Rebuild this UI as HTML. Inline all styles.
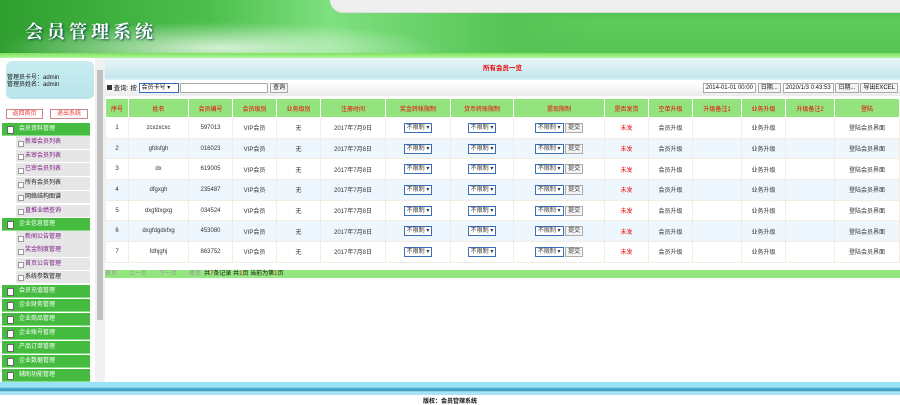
<!DOCTYPE html>
<html><head><meta charset="utf-8"><style>
*{margin:0;padding:0;box-sizing:border-box}
body{width:900px;height:405px;overflow:hidden;background:#fff;font-family:"Liberation Sans","Noto Sans CJK SC",sans-serif;font-size:7px;color:#333;position:relative}
.abs{position:absolute}
#hdr{left:0;top:0;width:900px;height:53px;background:linear-gradient(#44b944,#5ccc5c 40%,#55c455)}
#hdrtop{left:330px;top:0;width:570px;height:13px;background:#efefef;border-bottom:1px solid #ddd;border-bottom-left-radius:14px}
#hdrl{left:0;top:0;width:600px;height:53px;background:radial-gradient(ellipse 220px 26px at 220px 48px,rgba(255,255,255,.75),rgba(255,255,255,0)),linear-gradient(90deg,#2f9f2f,#4cc04c 35%,#7fe07f 55%,#55c455 85%,rgba(85,196,85,0))}
#logo{left:25px;top:18px;font-size:18px;color:#fff;font-weight:bold;letter-spacing:4px;text-shadow:1px 1px 2px #145;font-family:"Liberation Serif","Noto Serif CJK SC",serif}
#strip{left:0;top:53px;width:900px;height:5px;background:linear-gradient(#7ee05a,#b0f7a0)}
#left{left:0;top:58px;width:95px;height:324px;background:#fff}
#info{left:6px;top:3px;width:88px;height:38px;border-radius:6px;background:linear-gradient(#c8edf1,#b9e3ea);font-size:6px;color:#111;padding:14px 0 0 1px;line-height:7px}
.btn{top:51px;height:10px;border:1px solid #c88;background:#fff;color:#e33;font-size:6px;line-height:8px;text-align:center}
.mh{position:absolute;left:2px;width:88px;height:13px;background:#45bb3f;color:#fff;font-size:6px;line-height:13px;padding-left:17px;border-bottom:1px solid #8d8}
.mh:before{content:"";position:absolute;left:5px;top:3px;width:5px;height:6px;background:#fff;border:1px solid #666}
.mi{position:absolute;left:16px;width:74px;height:13.5px;background:#e6e6e6;color:#80208a;font-size:6px;line-height:13px;padding-left:9px;border-bottom:1px solid #fff}
.mi:before{content:"";position:absolute;left:2px;top:4.5px;width:4px;height:4px;border:1px solid #999;background:#fff}
#sb{left:95px;top:58px;width:10px;height:324px;background:#f1f1f1}
#sbt{left:97px;top:70px;width:6px;height:250px;background:#c1c1c1}
#title{left:105px;top:58px;width:795px;height:22px;background:linear-gradient(#eaf7fa,#c2e4ed);border-bottom:2px solid #d7eef3;text-align:center;color:#e00;font-size:6.5px;line-height:22px;font-weight:bold}
#tool{left:105px;top:82px;width:795px;height:14px;background:linear-gradient(#fff,#ececec);font-size:6.5px;color:#111;line-height:14px}
.sel{display:inline-block;border:1px solid #3a6fb8;background:#fff;height:10px;line-height:8px;vertical-align:middle;font-size:6px;padding:0 2px}
.b2{display:inline-block;border:1px solid #aaa;background:#f4f4f4;height:10px;line-height:8px;vertical-align:middle;font-size:6px;padding:0 2px}
table{position:absolute;left:105px;top:98px;width:795px;border-collapse:collapse}
td,th{border:1px solid #f3ece0;text-align:center;font-size:6px;font-weight:normal;height:20.7px;white-space:nowrap}
th{background:#93e37e;color:#e00;height:19px;border-color:#fff}
tr:nth-child(odd) td{background:#eef7fd}
.r{color:#e00}
#pg{left:105px;top:270px;width:795px;height:8px;background:#93e77e;font-size:6px;line-height:8px;color:#111}
#pg span.g{color:#999;margin-right:12px}
#foot{left:0;top:382px;width:900px;height:13px;background:linear-gradient(#9ce2f6 0,#9ce2f6 40%,#5bbddb 45%,#3a8fb6 65%,#a8e4f5 75%)}
#ft{left:0;top:396px;width:900px;text-align:center;font-size:6px;color:#111;font-weight:bold}
</style></head><body>
<div id="hdr" class="abs"></div><div id="hdrl" class="abs"></div><div id="hdrtop" class="abs"></div>
<div id="logo" class="abs">会员管理系统</div>
<div id="strip" class="abs"></div>
<div id="left" class="abs">
<div id="info" class="abs">管理员卡号：admin<br>管理员姓名：admin</div>
<div class="btn abs" style="left:6px;width:37px">返回首页</div>
<div class="btn abs" style="left:50px;width:38px">退出系统</div>
<div class="mh" style="top:65px">会员资料管理</div>
<div class="mi" style="top:78px">新增会员列表</div>
<div class="mi" style="top:91.7px">未审会员列表</div>
<div class="mi" style="top:105.4px">已审会员列表</div>
<div class="mi" style="top:119.1px;color:#222">所有会员列表</div>
<div class="mi" style="top:132.8px;color:#222">网络结构图谱</div>
<div class="mi" style="top:146.5px">直推业绩查询</div>
<div class="mh" style="top:160px">企业信息管理</div>
<div class="mi" style="top:173px">新闻公告管理</div>
<div class="mi" style="top:186.3px">奖金制度管理</div>
<div class="mi" style="top:199.6px">首页公告管理</div>
<div class="mi" style="top:212.9px;color:#222">系统参数管理</div>
<div class="mh" style="top:227px">会员充值管理</div>
<div class="mh" style="top:241px">企业财务管理</div>
<div class="mh" style="top:255px">企业商品管理</div>
<div class="mh" style="top:269px">企业账号管理</div>
<div class="mh" style="top:283px">产品订单管理</div>
<div class="mh" style="top:297px">企业数据管理</div>
<div class="mh" style="top:311px">辅助功能管理</div>
</div>
<div id="sb" class="abs"></div><div id="sbt" class="abs"></div>
<div id="title" class="abs">所有会员一览</div>
<div id="tool" class="abs">&nbsp;<span style="display:inline-block;width:5px;height:5px;background:#333"></span> 查询: 按 <span class="sel" style="width:40px">会员卡号 ▾</span> <span class="sel" style="width:88px;border-color:#aaa"></span> <span class="b2">查询</span>
<span style="position:absolute;right:2px;top:0"><span class="sel" style="border-color:#aaa">2014-01-01 00:00</span> <span class="b2">日期...</span> <span class="sel" style="border-color:#aaa">2020/1/3 0:43:53</span> <span class="b2">日期...</span> <span class="b2">导出EXCEL</span></span></div>
<table>
<tr><th style="width:23px">序号</th><th style="width:60px">姓名</th><th style="width:44px">会员编号</th><th style="width:44px">会员级别</th><th style="width:44px">业务级别</th><th style="width:65px">注册时间</th><th style="width:65px">奖金转帐限制</th><th style="width:63px">货币转账限制</th><th style="width:91px">提现限制</th><th style="width:44px">是否发货</th><th style="width:44px">空单升级</th><th style="width:49px">升级备注1</th><th style="width:44px">业务升级</th><th style="width:49px">升级备注2</th><th>登陆</th></tr>
<tr><td>1</td><td>zcxzxcxc</td><td>597013</td><td>VIP会员</td><td>无</td><td>2017年7月9日</td><td><span class="sel">不限制 ▾</span></td><td><span class="sel">不限制 ▾</span></td><td><span class="sel">不限制 ▾</span> <span class="b2">提交</span></td><td class="r">未发</td><td>会员升级</td><td></td><td>业务升级</td><td></td><td>登陆会员界面</td></tr>
<tr><td>2</td><td>gfdsfgh</td><td>016023</td><td>VIP会员</td><td>无</td><td>2017年7月8日</td><td><span class="sel">不限制 ▾</span></td><td><span class="sel">不限制 ▾</span></td><td><span class="sel">不限制 ▾</span> <span class="b2">提交</span></td><td class="r">未发</td><td>会员升级</td><td></td><td>业务升级</td><td></td><td>登陆会员界面</td></tr>
<tr><td>3</td><td>dx</td><td>619005</td><td>VIP会员</td><td>无</td><td>2017年7月8日</td><td><span class="sel">不限制 ▾</span></td><td><span class="sel">不限制 ▾</span></td><td><span class="sel">不限制 ▾</span> <span class="b2">提交</span></td><td class="r">未发</td><td>会员升级</td><td></td><td>业务升级</td><td></td><td>登陆会员界面</td></tr>
<tr><td>4</td><td>dfgxgh</td><td>235487</td><td>VIP会员</td><td>无</td><td>2017年7月8日</td><td><span class="sel">不限制 ▾</span></td><td><span class="sel">不限制 ▾</span></td><td><span class="sel">不限制 ▾</span> <span class="b2">提交</span></td><td class="r">未发</td><td>会员升级</td><td></td><td>业务升级</td><td></td><td>登陆会员界面</td></tr>
<tr><td>5</td><td>dxgfdxgxg</td><td>034524</td><td>VIP会员</td><td>无</td><td>2017年7月8日</td><td><span class="sel">不限制 ▾</span></td><td><span class="sel">不限制 ▾</span></td><td><span class="sel">不限制 ▾</span> <span class="b2">提交</span></td><td class="r">未发</td><td>会员升级</td><td></td><td>业务升级</td><td></td><td>登陆会员界面</td></tr>
<tr><td>6</td><td>dxgfdgdxfxg</td><td>453080</td><td>VIP会员</td><td>无</td><td>2017年7月8日</td><td><span class="sel">不限制 ▾</span></td><td><span class="sel">不限制 ▾</span></td><td><span class="sel">不限制 ▾</span> <span class="b2">提交</span></td><td class="r">未发</td><td>会员升级</td><td></td><td>业务升级</td><td></td><td>登陆会员界面</td></tr>
<tr><td>7</td><td>fdhjghj</td><td>863752</td><td>VIP会员</td><td>无</td><td>2017年7月8日</td><td><span class="sel">不限制 ▾</span></td><td><span class="sel">不限制 ▾</span></td><td><span class="sel">不限制 ▾</span> <span class="b2">提交</span></td><td class="r">未发</td><td>会员升级</td><td></td><td>业务升级</td><td></td><td>登陆会员界面</td></tr>
</table>
<div id="pg" class="abs"><span class="g">首页</span><span class="g">上一页</span><span class="g">下一页</span><span class="g" style="margin-right:3px">尾页</span>共<span class="r">7</span>条记录 共<span class="r">1</span>页 当前为第<span class="r">1</span>页</div>
<div id="foot" class="abs"></div>
<div id="ft" class="abs">版权：会员管理系统</div>
</body></html>
